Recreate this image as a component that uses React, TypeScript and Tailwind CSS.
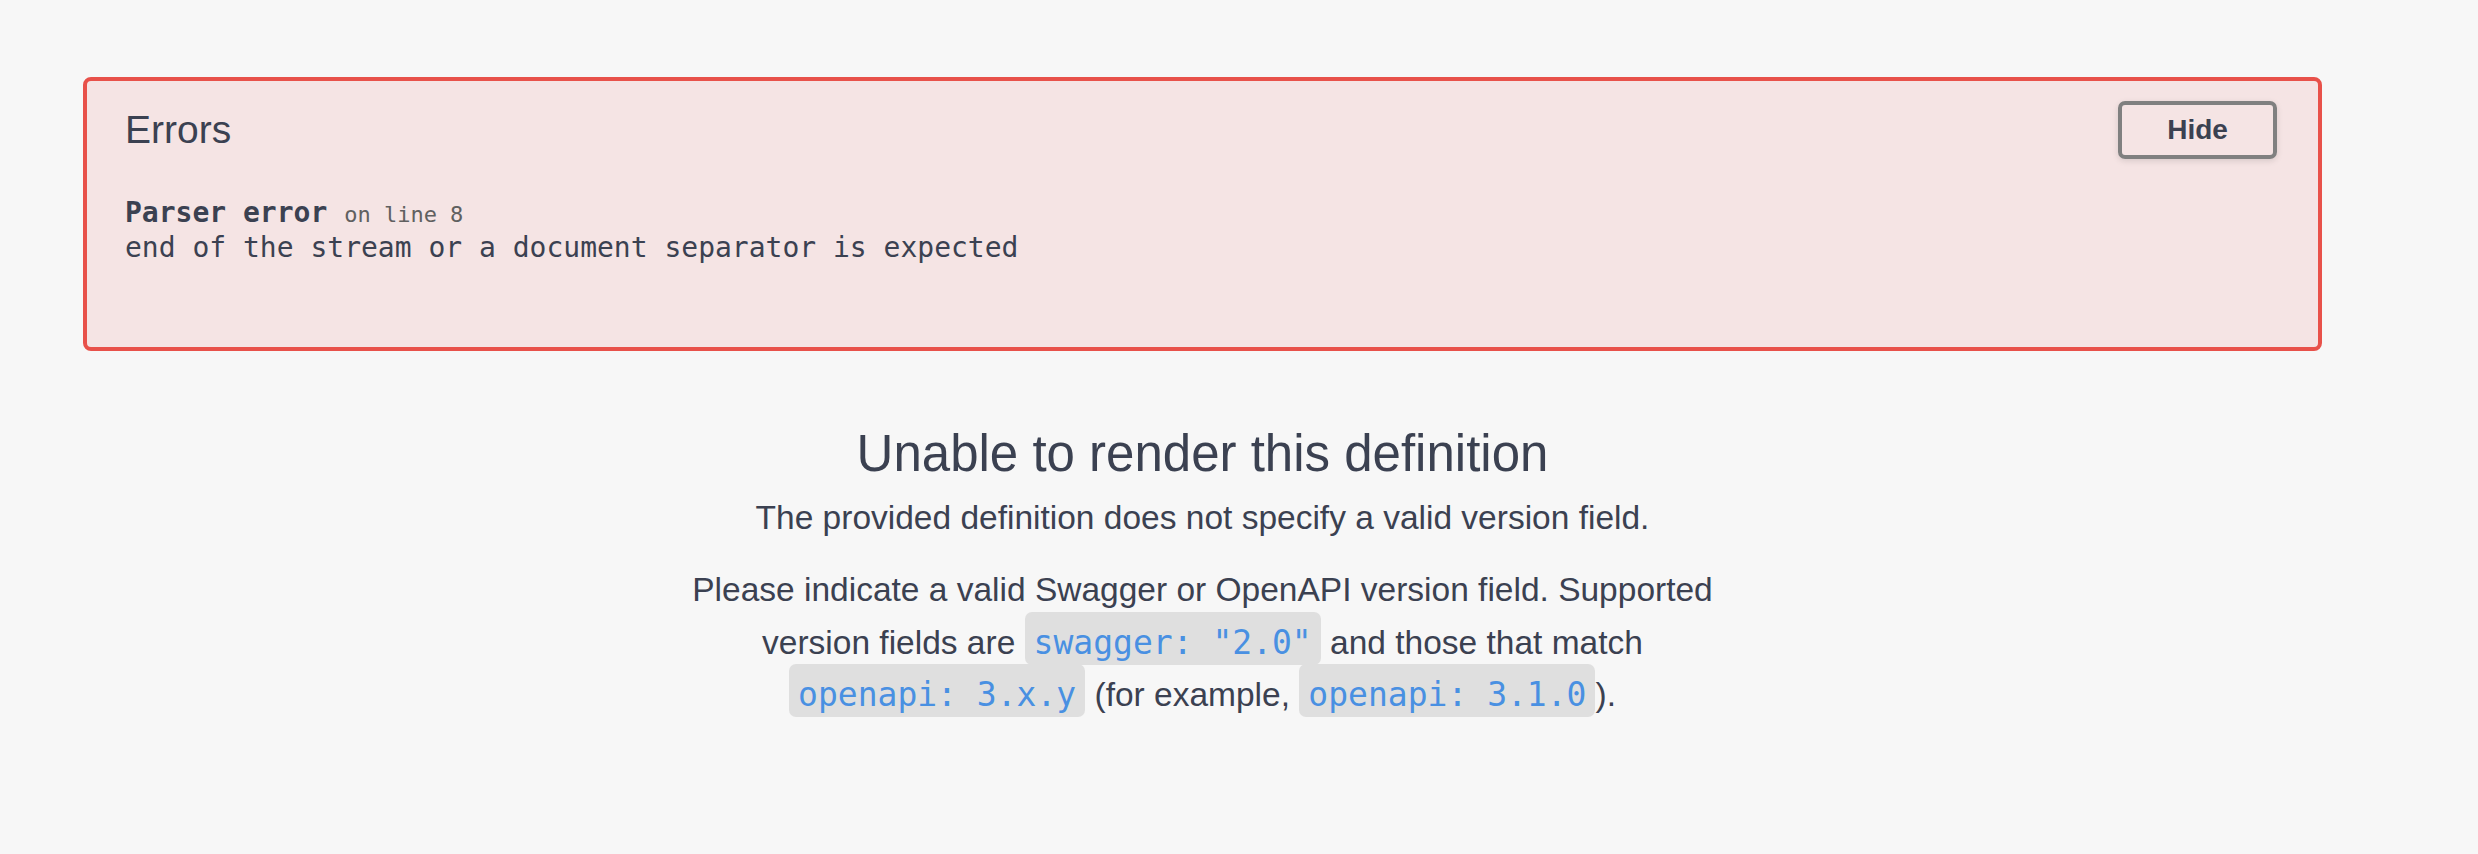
export default function App() {
    return (
        <div className="min-h-screen bg-[#f7f7f7] font-['Liberation_Sans',Arial,sans-serif] text-[#3b4151]">
            <div className="w-[2405px] px-[83px] pt-[77px]">
                {/* Errors panel */}
                <div className="rounded-[8px] border-4 border-[#e8514a] bg-[#f5e4e4] pl-[38px] pr-[41px] pt-[20px] pb-[83px]">
                    <div className="flex items-center justify-between">
                        <h4 className="text-[39px] leading-[46px]">Errors</h4>
                        <button className="h-[58px] w-[159px] rounded-[7px] border-4 border-[#808080] text-[28px] font-bold text-[#3b4151] shadow-[0_2px_6px_rgba(0,0,0,0.12)]">
                            Hide
                        </button>
                    </div>
                    <div className="mt-[37px] font-['DejaVu_Sans_Mono',monospace] text-[28px] leading-[33px]">
                        <div>
                            <span className="font-bold">Parser error</span>{" "}
                            <small className="text-[22px] text-[#606060]">on line 8</small>
                        </div>
                        <div>end of the stream or a document separator is expected</div>
                    </div>
                </div>

                {/* Fallback message */}
                <div className="mt-[75px] flex flex-col items-center text-center">
                    <h2 className="text-[51px] leading-[56px]">Unable to render this definition</h2>
                    <p className="mt-[10px] text-[33.5px] leading-[52px]">
                        The provided definition does not specify a valid version field.
                    </p>
                    <p className="mt-[20px] max-w-[1080px] text-[33.5px] leading-[52.5px]">
                        Please indicate a valid Swagger or OpenAPI version field. Supported version fields are{" "}
                        <code className="whitespace-nowrap rounded-[7px] bg-[#dfdfdf] px-[9px] pt-[11px] pb-[3px] font-['DejaVu_Sans_Mono',monospace] text-[33px] text-[#4990e2]">
                            swagger: "2.0"
                        </code>{" "}
                        and those that match{" "}
                        <code className="whitespace-nowrap rounded-[7px] bg-[#dfdfdf] px-[9px] pt-[11px] pb-[3px] font-['DejaVu_Sans_Mono',monospace] text-[33px] text-[#4990e2]">
                            openapi: 3.x.y
                        </code>{" "}
                        (for example,{" "}
                        <code className="whitespace-nowrap rounded-[7px] bg-[#dfdfdf] px-[9px] pt-[11px] pb-[3px] font-['DejaVu_Sans_Mono',monospace] text-[33px] text-[#4990e2]">
                            openapi: 3.1.0
                        </code>
                        ).
                    </p>
                </div>
            </div>
        </div>
    );
}
